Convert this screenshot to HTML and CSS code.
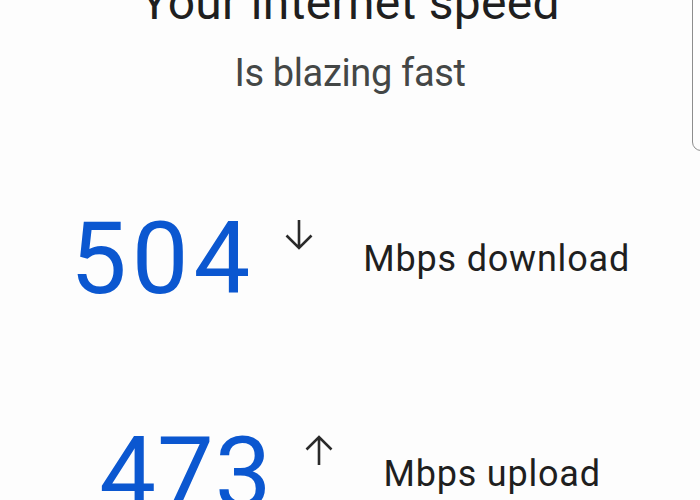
FILE: index.html
```html
<!DOCTYPE html>
<html lang="en">
<head>
  <meta charset="UTF-8" />
  <meta name="viewport" content="width=device-width, initial-scale=1.0"/>
  <title>Speed test result</title>
  <link rel="stylesheet" href="styles.css">
</head>
<body>

  <!-- heading -->
  <header class="heading">
    <h1>Your internet speed</h1>
    <p>Is blazing fast</p>
  </header>

  <!-- results -->
  <main class="results">
    <div class="result">
      <span class="value">504</span>
      <svg class="arrow" viewBox="0 0 28 30" width="28" height="30" aria-hidden="true">
        <path d="M14 0 V28 M1.5 15.5 L14 28 L26.5 15.5" />
      </svg>
      <span class="unit">Mbps download</span>
    </div>

    <div class="result upload">
      <span class="value">473</span>
      <svg class="arrow" viewBox="0 0 28 30" width="28" height="30" aria-hidden="true">
        <path d="M14 30 V2 M1.5 14.5 L14 2 L26.5 14.5" />
      </svg>
      <span class="unit">Mbps upload</span>
    </div>
  </main>

  <!-- scroll thumb -->
  <div class="scroll-thumb"></div>

</body>
</html>
```

FILE: styles.css
```css
:root {
  --ink: #1f1f1f;
  --ink-soft: #444746;
  --blue: #0b57d0;
  --bg: #fdfdfd;
}

body {
  margin: 0;
  background: var(--bg);
  font-family: Roboto, 'Noto Sans', sans-serif;
  color: var(--ink);
  overflow: hidden;
}

.heading {
  text-align: center;
  margin-top: -25px;
}

.heading h1 {
  margin: 0;
  font-size: 48px;
  line-height: 56px;
  font-weight: 400;
  letter-spacing: 0.3px;
  color: var(--ink);
}

.heading p {
  margin: 19px 0 0;
  font-size: 38px;
  line-height: 46px;
  letter-spacing: -0.35px;
  color: var(--ink-soft);
}

.results {
  display: flex;
  flex-direction: column;
  gap: 114px;
  margin-top: 112px;
}

.result {
  display: flex;
  align-items: center;
  justify-content: center;
}

.value {
  font-size: 101px;
  line-height: 101px;
  letter-spacing: 5px;
  color: var(--blue);
}

.upload .value {
  letter-spacing: 1px;
}

.arrow {
  align-self: flex-start;
  margin: 12px 50px 0 30px;
  fill: none;
  stroke: #2a2a2a;
  stroke-width: 2.6;
}

.upload .arrow {
  margin-left: 33px;
}

.unit {
  font-size: 36px;
  line-height: 36px;
  letter-spacing: 0.8px;
  color: var(--ink);
}

.scroll-thumb {
  position: fixed;
  top: -12px;
  right: -10px;
  width: 16px;
  height: 161px;
  border: 1.5px solid #8d8d8d;
  border-radius: 9px;
}
```
